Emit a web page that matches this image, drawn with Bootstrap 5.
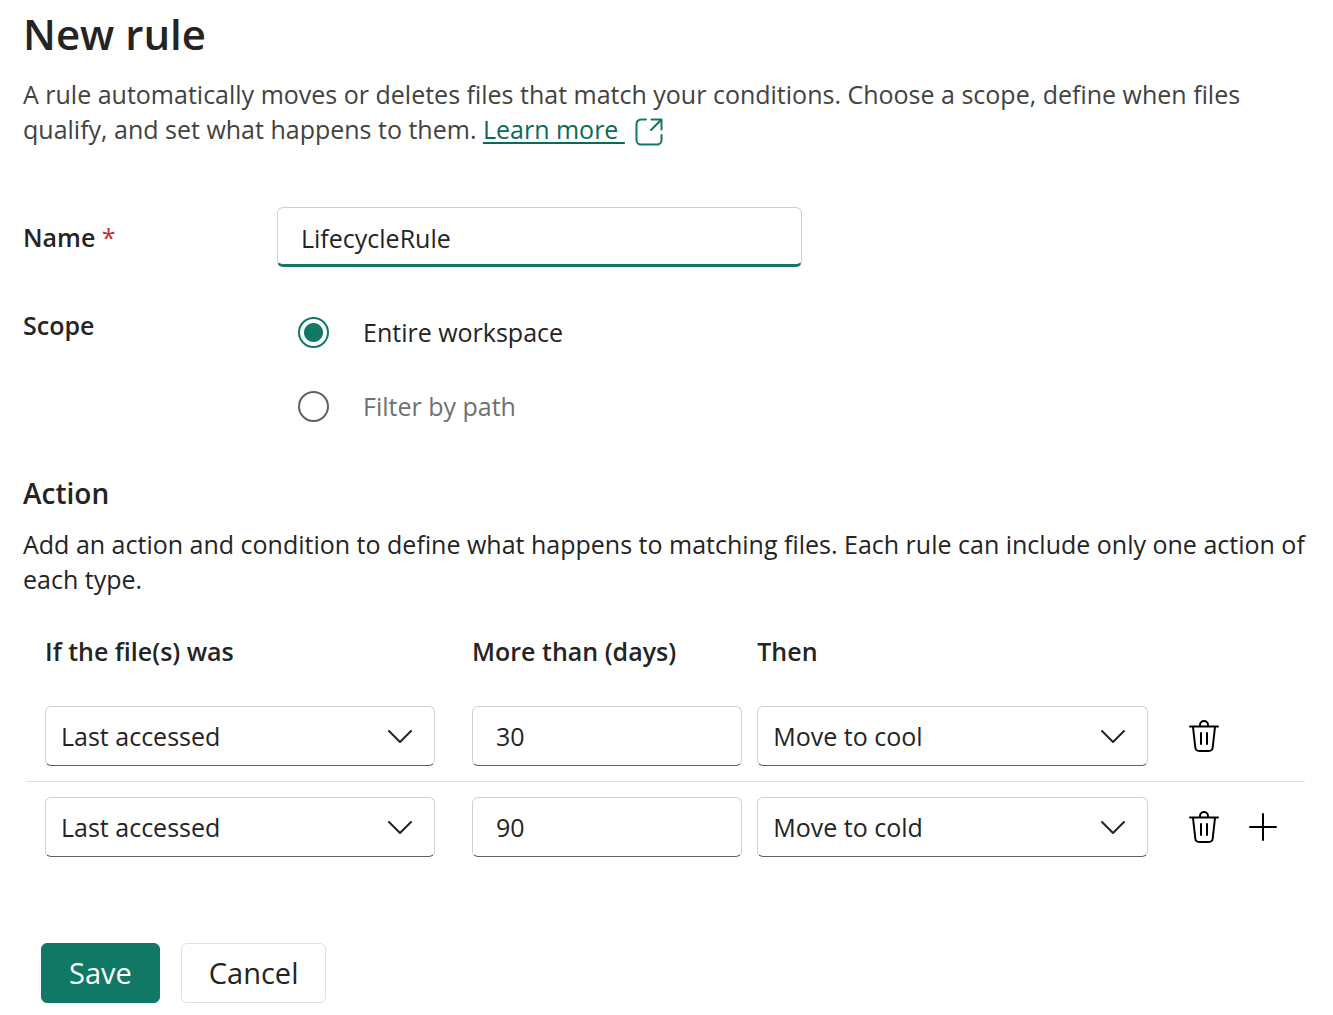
<!DOCTYPE html>
<html lang="en">
<head>
<meta charset="utf-8">
<meta name="viewport" content="width=device-width, initial-scale=1">
<title>New rule</title>
<link href="https://cdn.jsdelivr.net/npm/bootstrap@5.3.0/dist/css/bootstrap.min.css" rel="stylesheet">
<style>
  :root { --brand: #117865; --link: #0c695a; --ink: #242424; --line: #d1d1d1; --edge: #616161; }
  body { font-family: "Open Sans", "Noto Sans", sans-serif; font-size: 25px; line-height: 35px; color: var(--ink); background: #fff; }
  .rule-form { padding: 8px 24px 12px 23px; }
  .rule-title { font-size: 42px; line-height: 52px; font-weight: 600; margin-bottom: 17px; }
  .rule-intro { color: #424242; margin-bottom: 60px; }
  .rule-intro a { color: var(--link); text-decoration-thickness: 2px; text-underline-offset: 3px; }
  .rule-heading { font-size: 28px; line-height: 36px; font-weight: 600; margin: 51px 0 16px; }
  .action-text { margin-bottom: 37px; }
  .field-label { flex: 0 0 254px; font-weight: 600; line-height: 35px; margin: 0; }
  .required-mark { color: #bc2f32; font-weight: 400; }
  .form-control, .form-select { height: 60px; font-size: 25px; line-height: 35px; color: var(--ink); border: 1px solid var(--line); border-bottom-color: var(--edge); border-radius: 6px; padding: 0 23px; }
  .form-select { padding: 0 60px 0 15px; background-size: 26px 16px; background-position: right 21px center;
    background-image: url("data:image/svg+xml,%3Csvg xmlns='http://www.w3.org/2000/svg' viewBox='0 0 26 16'%3E%3Cpath d='M2 3l11 11L24 3' fill='none' stroke='%23242424' stroke-width='2' stroke-linecap='round' stroke-linejoin='round'/%3E%3C/svg%3E"); }
  .name-row { margin-bottom: 41px; }
  .name-field { max-width: 525px; border-bottom: 3px solid var(--brand); padding-top: 4px; }
  .scope-list { padding: 6px 0 0 21px; gap: 38px; }
  .scope-list .form-check { min-height: 36px; padding: 0; margin: 0; gap: 34px; }
  .scope-list .form-check-input { width: 31px; height: 31px; margin: 0; float: none; border: 2px solid var(--edge); flex: none; }
  .scope-list .form-check-input:checked { background: #fff radial-gradient(circle, var(--brand) 9px, #fff 10px); border-color: var(--brand); }
  .text-dim { color: #707070; }
  .rule-table { table-layout: fixed; margin: 0; color: var(--ink); }
  .table-holder { padding: 0 4px 0 3px; }
  .rule-table th, .rule-table td { padding: 15px 0 15px 15px; border-color: #e0e0e0; vertical-align: middle; }
  .rule-table thead th, .rule-table thead td { font-weight: 600; padding-top: 0; padding-bottom: 22px; border: 0; }
  .rule-table th:first-child, .rule-table td:first-child { padding-left: 19px; padding-right: 22px; }
  .rule-table tbody tr:last-child td { border: 0; }
  .rule-table td:last-child { padding-left: 34px; }
  .icon-btn { border: 0; background: none; padding: 0; width: 44px; height: 44px; display: flex; align-items: center; justify-content: center; color: #000; }
  .row-tools { gap: 15px; }
  .form-actions { padding: 71px 18px 0; gap: 21px; }
  .form-actions .btn { height: 60px; font-size: 29px; line-height: 40px; border-radius: 6px; padding: 0 27px; }
  .btn-save, .btn-save:hover { background: var(--brand); color: #fff; border-color: var(--brand); }
  .btn-cancel { color: var(--ink); border-color: #e0e0e0; }
</style>
<script src="https://cdn.jsdelivr.net/npm/bootstrap@5.3.0/dist/js/bootstrap.bundle.min.js"></script>
</head>
<body>
<svg class="d-none" aria-hidden="true">
  <symbol id="trash" viewBox="0 0 32 34" fill="none" stroke="currentColor" stroke-width="2" stroke-linecap="round" stroke-linejoin="round">
    <path d="M2 7.500h28M12 7V6a4 4 0 0 1 8 0v1M5 8l2.300 20.500a4 4 0 0 0 4 3.500h9.400a4 4 0 0 0 4-3.500L27 8M13 14v11M19 14v11"/>
  </symbol>
</svg>
<main class="rule-form">
  <h1 class="rule-title">New rule</h1>
  <p class="rule-intro">A rule automatically moves or deletes files that match your conditions. Choose a scope, define when files qualify, and set what happens to them. <a href="#">Learn more&nbsp;</a>
    <svg class="ms-1" width="28" height="28" viewBox="0 0 28 28" fill="none" stroke="#117865" stroke-width="2" stroke-linecap="round" stroke-linejoin="round" aria-hidden="true"><path d="M11 1.500H6A4.500 4.500 0 0 0 1.500 6v16A4.500 4.500 0 0 0 6 26.500h16a4.500 4.500 0 0 0 4.500-4.500v-5M16.500 1.500h10v10M26.500 1.500L16 12"/></svg></p>
  <form>
    <div class="name-row d-flex align-items-center">
      <label class="field-label" for="ruleName">Name <span class="required-mark">*</span></label>
      <input class="form-control name-field" id="ruleName" type="text" value="LifecycleRule" required>
    </div>
    <div class="d-flex align-items-start" role="radiogroup" aria-labelledby="scopeLabel">
      <span class="field-label" id="scopeLabel">Scope</span>
      <div class="scope-list d-flex flex-column">
        <div class="form-check d-flex align-items-center">
          <input class="form-check-input" type="radio" name="scope" id="scopeAll" checked>
          <label class="form-check-label" for="scopeAll">Entire workspace</label>
        </div>
        <div class="form-check d-flex align-items-center">
          <input class="form-check-input" type="radio" name="scope" id="scopePath">
          <label class="form-check-label text-dim" for="scopePath">Filter by path</label>
        </div>
      </div>
    </div>
    <h2 class="rule-heading">Action</h2>
    <p class="action-text">Add an action and condition to define what happens to matching files. Each rule can include only one action of each type.</p>
    <div class="table-holder">
      <table class="table rule-table w-100">
        <colgroup><col style="width:33.700%"><col style="width:22.300%"><col style="width:31.700%"><col></colgroup>
        <thead>
          <tr><th scope="col">If the file(s) was</th><th scope="col">More than (days)</th><th scope="col">Then</th><td></td></tr>
        </thead>
        <tbody>
          <tr>
            <td><select class="form-select" aria-label="If the file was"><option>Last accessed</option></select></td>
            <td><input class="form-control" type="text" inputmode="numeric" value="30" aria-label="More than (days)"></td>
            <td><select class="form-select" aria-label="Then"><option>Move to cool</option></select></td>
            <td><button class="icon-btn" type="button" aria-label="Delete"><svg width="32" height="34"><use href="#trash"/></svg></button></td>
          </tr>
          <tr>
            <td><select class="form-select" aria-label="If the file was"><option>Last accessed</option></select></td>
            <td><input class="form-control" type="text" inputmode="numeric" value="90" aria-label="More than (days)"></td>
            <td><select class="form-select" aria-label="Then"><option>Move to cold</option></select></td>
            <td><div class="row-tools d-flex"><button class="icon-btn" type="button" aria-label="Delete"><svg width="32" height="34"><use href="#trash"/></svg></button>
              <button class="icon-btn" type="button" aria-label="Add"><svg width="28" height="28" viewBox="0 0 28 28" fill="none" stroke="currentColor" stroke-width="2" stroke-linecap="round"><path d="M14 1v26M1 14h26"/></svg></button></div></td>
          </tr>
        </tbody>
      </table>
    </div>
    <div class="form-actions d-flex">
      <button class="btn btn-save" type="submit">Save</button>
      <button class="btn btn-cancel" type="button">Cancel</button>
    </div>
  </form>
</main>
</body>
</html>
